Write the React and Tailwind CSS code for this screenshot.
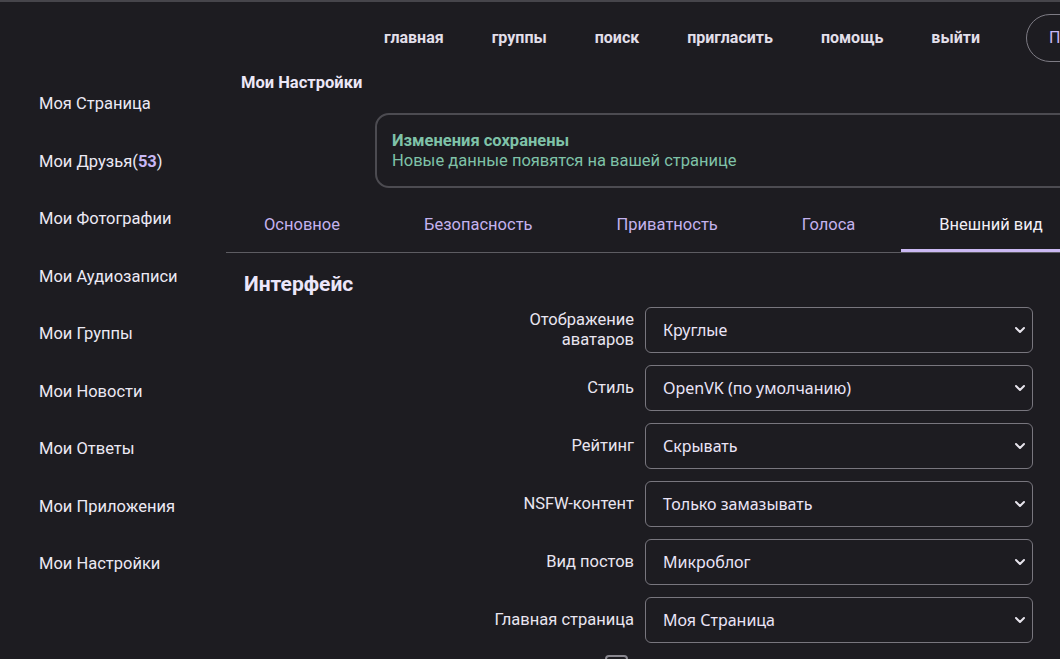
import { ChevronDown } from "lucide-react";

const nav = ["главная", "группы", "поиск", "пригласить", "помощь", "выйти"];

const side = [
  "Моя Страница",
  "Мои Друзья",
  "Мои Фотографии",
  "Мои Аудиозаписи",
  "Мои Группы",
  "Мои Новости",
  "Мои Ответы",
  "Мои Приложения",
  "Мои Настройки",
];

const tabs = ["Основное", "Безопасность", "Приватность", "Голоса", "Внешний вид"];

const rows = [
  ["Отображение аватаров", "Круглые"],
  ["Стиль", "OpenVK (по умолчанию)"],
  ["Рейтинг", "Скрывать"],
  ["NSFW-контент", "Только замазывать"],
  ["Вид постов", "Микроблог"],
  ["Главная страница", "Моя Страница"],
];

export default function App() {
  return (
    <div
      className="w-[1060px] h-[659px] overflow-hidden bg-[#1d1c21] border-t-2 border-[#46454b] text-[#ebe7f3]"
      style={{ fontFamily: "Roboto, 'Noto Sans', sans-serif" }}
    >
      <header className="h-[70px] pt-[2px] flex items-center pl-[384px] whitespace-nowrap">
        <nav className="flex items-center gap-[48px] text-[16px] font-bold text-[#e2dfe9]">
          {nav.map((n) => (
            <a key={n} className="cursor-pointer">
              {n}
            </a>
          ))}
        </nav>
        <div className="ml-[46px] h-[48px] w-[200px] shrink-0 rounded-full border border-[#7d7b84] flex items-center pl-[22px] text-[16px] text-[#c9b8f7]">
          Поиск...
        </div>
      </header>

      <div className="flex">
        <aside className="w-[226px] shrink-0 pl-[39px] pt-[4px] flex flex-col">
          {side.map((s) => (
            <a key={s} className="h-[57.5px] flex items-center text-[16.5px] text-[#ece9f4]">
              {s}
              {s === "Мои Друзья" && (
                <span>
                  (<b className="text-[#c8b8f6]">53</b>)
                </span>
              )}
            </a>
          ))}
        </aside>

        <main className="flex-1 min-w-0">
          <h2 className="pl-[15px] pt-[1px] text-[16.5px] leading-[20px] font-bold text-[#ece7f7]">
            Мои Настройки
          </h2>

          <div className="ml-[149px] mt-[20px] w-[720px] h-[75px] rounded-[14px] border-2 border-[#4c4b51] pl-[15px] pt-[16px] text-[16.5px] leading-[20px] text-[#7fc2a8]">
            <div className="font-bold">Изменения сохранены</div>
            <div>Новые данные появятся на вашей странице</div>
          </div>

          <div className="mt-[8px] w-[900px] flex border-b border-[#5d5c62] whitespace-nowrap">
            {tabs.map((t, i) => {
              const active = i === tabs.length - 1;
              return (
                <div
                  key={t}
                  className={
                    "relative h-[56px] pt-[2px] flex items-center pl-[38px] pr-[46px] text-[16.5px] " +
                    (active ? "text-[#f1eff6]" : "text-[#c4b2ee]")
                  }
                >
                  {t}
                  {active && (
                    <span className="absolute left-0 right-[-60px] bottom-0 h-[3px] bg-[#cbb9f3]" />
                  )}
                </div>
              );
            })}
          </div>

          <h3 className="pl-[18px] mt-[17px] text-[21px] leading-[28px] font-bold text-[#ece6fa]">
            Интерфейс
          </h3>

          <div className="mt-[9px] pl-[258px] flex flex-col gap-[12px]">
            {rows.map(([label, value]) => (
              <div key={label} className="flex items-center gap-[11px]">
                <label className="w-[150px] text-right text-[16.5px] leading-[20px] text-[#e9e5f0]">
                  {label}
                </label>
                <div className="w-[388px] h-[46px] rounded-[6px] border border-[#78767e] flex items-center justify-between pl-[17px] pr-[4px]">
                  <span
                    className="text-[16px] text-[#ebe5f8]"
                    style={{ fontFamily: "'Noto Sans', sans-serif" }}
                  >
                    {value}
                  </span>
                  <ChevronDown size={16} strokeWidth={3} className="text-[#e6e3ec]" />
                </div>
              </div>
            ))}
            <div className="flex pl-[121px]">
              <div className="w-[23px] h-[23px] rounded-[4px] border-2 border-[#8a8890]" />
            </div>
          </div>
        </main>
      </div>
    </div>
  );
}
